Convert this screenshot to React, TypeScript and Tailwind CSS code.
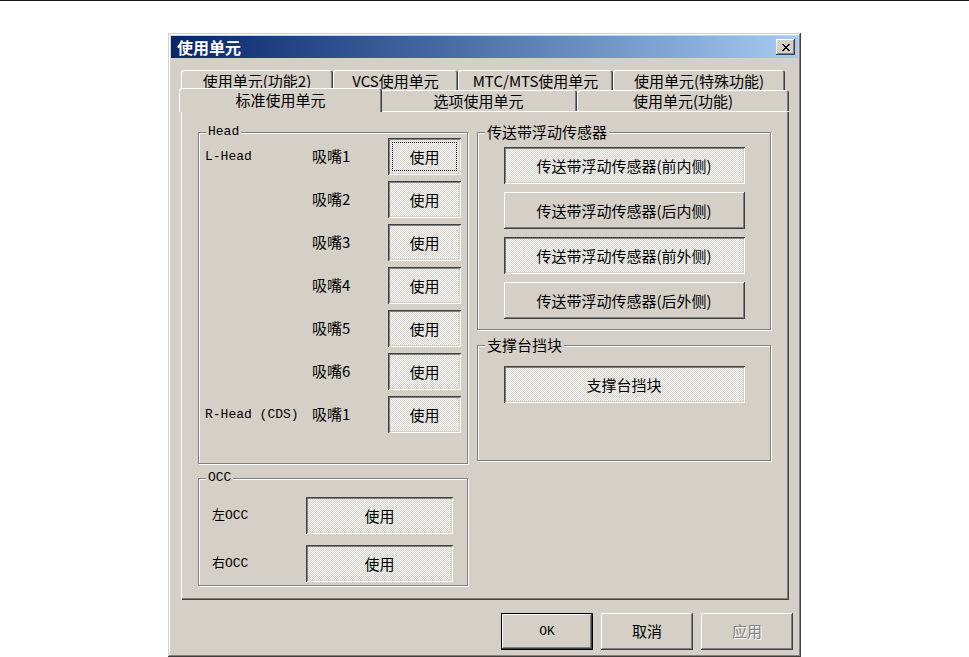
import type { ReactNode } from "react";

const cjk = "font-['Noto_Sans_CJK_SC',sans-serif]";
const mono = "font-['Liberation_Mono','Noto_Sans_CJK_SC',monospace]";
const raised =
  "bg-[#d4d0c8] shadow-[inset_-1px_-1px_#404040,inset_1px_1px_#ffffff,inset_-2px_-2px_#808080,inset_2px_2px_#d4d0c8]";
const sunken =
  "bg-[image:repeating-conic-gradient(#ffffff_0%_25%,#d4d0c8_0%_50%)] bg-[length:2px_2px] shadow-[inset_1px_1px_#404040,inset_-1px_-1px_#ffffff,inset_2px_2px_#808080,inset_-2px_-2px_#d4d0c8]";

const backTabs = [
  { label: "使用单元(功能2)", w: "w-[152px]" },
  { label: "VCS使用单元", w: "w-[125px]" },
  { label: "MTC/MTS使用单元", w: "w-[155px]" },
  { label: "使用单元(特殊功能)", w: "w-[172px]" },
];

const frontTabs = [
  { label: "标准使用单元", w: "w-[203px]", selected: true },
  { label: "选项使用单元", w: "w-[197px]" },
  { label: "使用单元(功能)", w: "w-[212px]" },
];

const nozzleRows = [
  { head: "L-Head", nozzle: "吸嘴1", focus: true },
  { head: "", nozzle: "吸嘴2" },
  { head: "", nozzle: "吸嘴3" },
  { head: "", nozzle: "吸嘴4" },
  { head: "", nozzle: "吸嘴5" },
  { head: "", nozzle: "吸嘴6" },
  { head: "R-Head (CDS)", nozzle: "吸嘴1" },
];

const sensors = [
  { label: "传送带浮动传感器(前内侧)", checked: true },
  { label: "传送带浮动传感器(后内侧)", checked: false },
  { label: "传送带浮动传感器(前外侧)", checked: true },
  { label: "传送带浮动传感器(后外侧)", checked: false },
];

export default function App() {
  return (
    <div className="min-h-screen bg-white text-black">
      <div className="h-px w-full bg-[#1a1a1a]" />
      <div className="ml-[168px] mt-[32px] flex h-[624px] w-[633px] flex-col bg-[#d4d0c8] p-[3px] shadow-[inset_-1px_-1px_#404040,inset_1px_1px_#d4d0c8,inset_-2px_-2px_#808080,inset_2px_2px_#ffffff]">
        <TitleBar />

        <div className="flex flex-col pl-[10px] pr-[5px] pt-[12px]">
          <div className="mr-[4px]">
            <div className="flex h-[20px]">
              {backTabs.map((tab) => (
                <div
                  key={tab.label}
                  className={`${tab.w} ${cjk} flex items-center justify-center rounded-t-[3px] text-[15px] leading-none shadow-[inset_1px_1px_#ffffff,inset_-1px_0_#404040,inset_-2px_0_#808080]`}
                >
                  {tab.label}
                </div>
              ))}
            </div>
            <div className="flex h-[21px] items-end">
              {frontTabs.map((tab) =>
                tab.selected ? (
                  <div
                    key={tab.label}
                    className={`${tab.w} ${cjk} relative z-10 -mx-[2px] -mb-px flex h-[24px] items-center justify-center rounded-t-[3px] bg-[#d4d0c8] pb-px text-[15px] leading-none shadow-[inset_1px_1px_#ffffff,inset_-1px_0_#404040,inset_-2px_0_#808080]`}
                  >
                    {tab.label}
                  </div>
                ) : (
                  <div
                    key={tab.label}
                    className={`${tab.w} ${cjk} flex h-[21px] items-center justify-center rounded-t-[3px] bg-[#d4d0c8] text-[15px] leading-none shadow-[inset_1px_1px_#ffffff,inset_-1px_0_#404040,inset_-2px_0_#808080]`}
                  >
                    {tab.label}
                  </div>
                )
              )}
            </div>

            <div className="flex h-[489px] gap-[9px] pl-[17px] pt-[21px] shadow-[inset_1px_1px_#ffffff,inset_-1px_-1px_#404040,inset_-2px_-2px_#808080]">
              <div className="flex w-[270px] flex-col">
                <Group title="Head" titleClass={`${mono} text-[13px]`} className="h-[332px]">
                  <div className="grid grid-cols-[107px_76px_73px] gap-y-[6px] pl-[6px] pt-[5px]">
                    {nozzleRows.map((row, i) => (
                      <Row key={i} {...row} />
                    ))}
                  </div>
                </Group>
                <Group title="OCC" titleClass={`${mono} text-[13px]`} className="mt-[14px] h-[108px]">
                  <div className="grid grid-cols-[94px_147px] gap-y-[11px] pl-[13px] pt-[18px]">
                    <span className={`${mono} self-center text-[13px]`}>左OCC</span>
                    <Toggle label="使用" checked className="h-[37px]" />
                    <span className={`${mono} self-center text-[13px]`}>右OCC</span>
                    <Toggle label="使用" checked className="h-[37px]" />
                  </div>
                </Group>
              </div>

              <div className="flex w-[294px] flex-col">
                <Group title="传送带浮动传感器" titleClass={`${cjk} text-[15px]`} className="h-[198px]">
                  <div className="flex flex-col items-center gap-[8px] pt-[14px]">
                    {sensors.map((s) => (
                      <Toggle key={s.label} label={s.label} checked={s.checked} className="h-[37px] w-[241px]" />
                    ))}
                  </div>
                </Group>
                <Group title="支撑台挡块" titleClass={`${cjk} text-[15px]`} className="mt-[15px] h-[116px]">
                  <div className="flex flex-col items-center pt-[20px]">
                    <Toggle label="支撑台挡块" checked className="h-[37px] w-[241px]" />
                  </div>
                </Group>
              </div>
            </div>
          </div>

          <div className="mt-[13px] flex justify-end gap-[8px]">
            <button className={`${mono} flex h-[37px] w-[92px] items-center justify-center bg-[#d4d0c8] text-[13px] shadow-[inset_0_0_0_1px_#000000,inset_-2px_-2px_#404040,inset_2px_2px_#ffffff,inset_-3px_-3px_#808080]`}>
              OK
            </button>
            <button className={`${raised} ${cjk} flex h-[37px] w-[92px] items-center justify-center text-[15px]`}>
              取消
            </button>
            <button className={`${raised} ${cjk} flex h-[37px] w-[92px] items-center justify-center text-[15px] text-[#808080] [text-shadow:1px_1px_0_#ffffff]`}>
              应用
            </button>
          </div>
        </div>
      </div>
    </div>
  );
}

function TitleBar() {
  return (
    <div className="flex h-[22px] items-center justify-between bg-gradient-to-r from-[#0a246a] to-[#a6caf0] pl-[6px] pr-[3px]">
      <span className={`${cjk} text-[16px] font-bold leading-none text-white`}>使用单元</span>
      <button className={`${raised} flex h-[16px] w-[19px] items-center justify-center`}>
        <svg width="8" height="7" viewBox="0 0 8 7" shapeRendering="crispEdges">
          <path
            fill="#000"
            d="M0 0h2v1H0zM6 0h2v1H6zM1 1h2v1H1zM5 1h2v1H5zM2 2h4v1H2zM3 3h2v1H3zM2 4h4v1H2zM1 5h2v1H1zM5 5h2v1H5zM0 6h2v1H0zM6 6h2v1H6z"
          />
        </svg>
      </button>
    </div>
  );
}

function Group({
  title,
  titleClass,
  className,
  children,
}: {
  title: string;
  titleClass: string;
  className?: string;
  children: ReactNode;
}) {
  return (
    <div
      className={`relative border border-[#808080] shadow-[1px_1px_0_#ffffff,inset_1px_1px_0_#ffffff] ${className ?? ""}`}
    >
      <span
        className={`${titleClass} absolute -top-[10px] left-[7px] bg-[#d4d0c8] px-[2px] leading-[18px]`}
      >
        {title}
      </span>
      {children}
    </div>
  );
}

function Row({ head, nozzle, focus }: { head: string; nozzle: string; focus?: boolean }) {
  return (
    <>
      <span className={`${mono} self-center text-[13px]`}>{head}</span>
      <span className={`${cjk} self-center text-[15px]`}>{nozzle}</span>
      <Toggle label="使用" checked focus={focus} className="h-[37px]" />
    </>
  );
}

function Toggle({
  label,
  checked,
  focus,
  className,
}: {
  label: string;
  checked: boolean;
  focus?: boolean;
  className?: string;
}) {
  return (
    <button
      className={`${checked ? sunken : raised} ${cjk} flex items-center justify-center text-[15px] leading-none ${className ?? ""}`}
    >
      {focus ? (
        <span className="m-[4px] flex flex-1 items-center justify-center self-stretch border border-dotted border-black">
          {label}
        </span>
      ) : (
        label
      )}
    </button>
  );
}
